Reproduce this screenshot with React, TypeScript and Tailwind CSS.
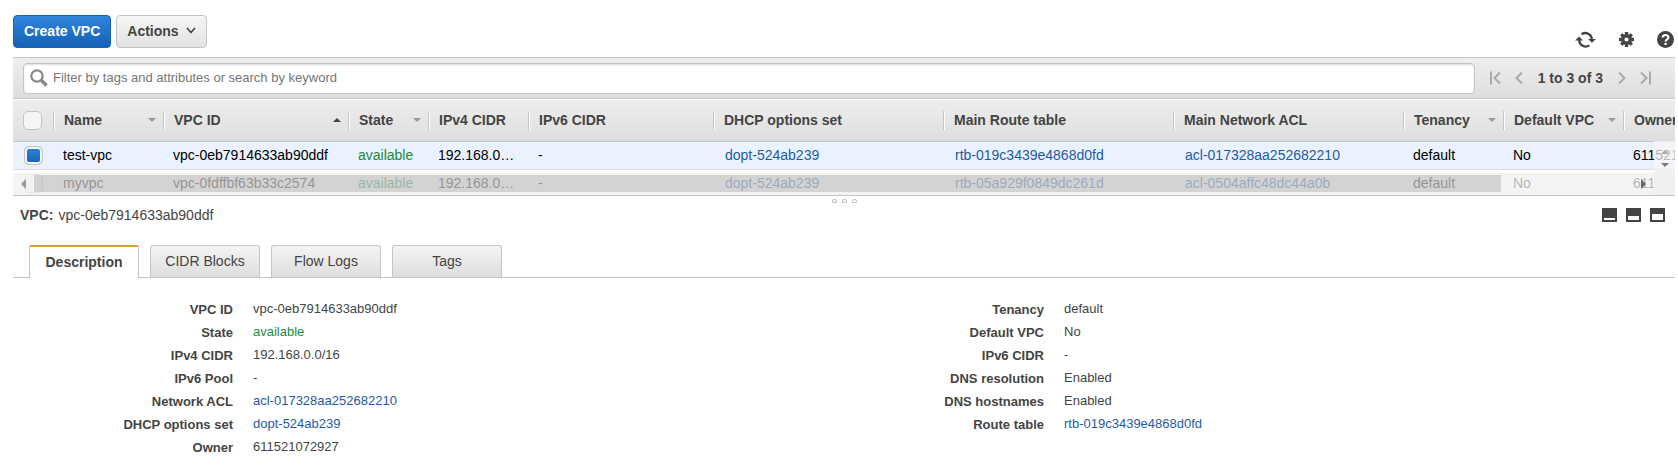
import type { ReactNode } from "react";

type Column = { label: string; width: string; sort?: "asc" | "idle" };

const columns: Column[] = [
  { label: "Name", width: "w-[110px]", sort: "idle" },
  { label: "VPC ID", width: "w-[185px]", sort: "asc" },
  { label: "State", width: "w-[80px]", sort: "idle" },
  { label: "IPv4 CIDR", width: "w-[100px]" },
  { label: "IPv6 CIDR", width: "w-[185px]" },
  { label: "DHCP options set", width: "w-[230px]" },
  { label: "Main Route table", width: "w-[230px]" },
  { label: "Main Network ACL", width: "w-[230px]" },
  { label: "Tenancy", width: "w-[100px]", sort: "idle" },
  { label: "Default VPC", width: "w-[120px]", sort: "idle" },
  { label: "Owner", width: "w-[130px]" },
];

const rows = [
  {
    selected: true,
    cells: ["test-vpc", "vpc-0eb7914633ab90ddf", "available", "192.168.0.0/16", "-", "dopt-524ab239", "rtb-019c3439e4868d0fd", "acl-017328aa252682210", "default", "No", "611521072927"],
  },
  {
    selected: false,
    cells: ["myvpc", "vpc-0fdffbf63b33c2574", "available", "192.168.0.0/16", "-", "dopt-524ab239", "rtb-05a929f0849dc261d", "acl-0504affc48dc44a0b", "default", "No", "611521072927"],
  },
];

const tabs = ["Description", "CIDR Blocks", "Flow Logs", "Tags"];

const leftDetails = [
  ["VPC ID", "vpc-0eb7914633ab90ddf"],
  ["State", "available"],
  ["IPv4 CIDR", "192.168.0.0/16"],
  ["IPv6 Pool", "-"],
  ["Network ACL", "acl-017328aa252682210"],
  ["DHCP options set", "dopt-524ab239"],
  ["Owner", "611521072927"],
];

const rightDetails = [
  ["Tenancy", "default"],
  ["Default VPC", "No"],
  ["IPv6 CIDR", "-"],
  ["DNS resolution", "Enabled"],
  ["DNS hostnames", "Enabled"],
  ["Route table", "rtb-019c3439e4868d0fd"],
];

function isLink(text: string) {
  return /^(dopt|rtb|acl)-/.test(text);
}

function Value({ text }: { text: string }) {
  if (isLink(text)) return <a href="#" className="text-[#1f5aa6]">{text}</a>;
  if (text === "available") return <span className="text-[#1d8a3c]">{text}</span>;
  return <>{text}</>;
}

function Triangle({ dir, className }: { dir: "up" | "down" | "left" | "right"; className: string }) {
  const points = { up: "0,4 4,0 8,4", down: "0,0 8,0 4,4", left: "5,0 5,10 0,5", right: "0,0 5,5 0,10" }[dir];
  const vertical = dir === "up" || dir === "down";
  return (
    <svg width={vertical ? 8 : 5} height={vertical ? 4 : 10} className={className} aria-hidden="true">
      <polygon points={points} fill="currentColor" />
    </svg>
  );
}

function IconButton({ label, children }: { label: string; children: ReactNode }) {
  return <button type="button" aria-label={label} className="block shrink-0">{children}</button>;
}

function RefreshIcon() {
  return (
    <svg width="21" height="17" viewBox="0 0 21 17" aria-hidden="true">
      <path d="M6.6 3.2A6.5 6.5 0 0 1 16.8 8.5M14.4 14.4A6.5 6.5 0 0 1 4.2 9" fill="none" stroke="#444" strokeWidth="2.3" />
      <path d="M13 8H21L17 11.8zM0 9.4h8L4 5.6z" fill="#444" />
    </svg>
  );
}

function GearIcon() {
  return (
    <svg width="15" height="17" viewBox="0 0 16 16" aria-hidden="true">
      <g fill="#444">
        {[0, 45, 90, 135].map((angle) => (
          <rect key={angle} x="6.2" y="0" width="3.6" height="16" rx="0.6" transform={`rotate(${angle} 8 8)`} />
        ))}
        <circle cx="8" cy="8" r="5.8" />
      </g>
      <circle cx="8" cy="8" r="2.2" fill="#fff" />
    </svg>
  );
}

function HelpIcon() {
  return (
    <svg width="17" height="17" viewBox="0 0 17 17" aria-hidden="true">
      <circle cx="8.5" cy="8.5" r="8.5" fill="#444" />
      <path d="M5.7 6.6C5.7 3.2 11.4 3.2 11.4 6.4 11.4 8.4 8.6 8.3 8.6 10.6" fill="none" stroke="#fff" strokeWidth="2.1" />
      <rect x="7.5" y="11.8" width="2.2" height="2.2" fill="#fff" />
    </svg>
  );
}

function PageArrow({ dir, bar }: { dir: "left" | "right"; bar?: boolean }) {
  return (
    <svg width={bar ? 11 : 8} height="14" className={dir === "right" ? "-scale-x-100" : ""} aria-hidden="true">
      {bar && <path d="M1 0.5v13" stroke="#aaa" strokeWidth="2" />}
      <path d={bar ? "M10 1.5 4.5 7 10 12.5" : "M7 1.5 1.5 7 7 12.5"} fill="none" stroke="#aaa" strokeWidth="2" />
    </svg>
  );
}

function PaneIcon({ top }: { top: number }) {
  return (
    <svg width="15" height="14" shapeRendering="crispEdges" aria-hidden="true">
      <rect width="15" height="14" fill="#444" />
      <rect x="2" y={top} width="11" height={12 - top} fill="#fff" />
    </svg>
  );
}

function CheckBox({ label, checked }: { label: string; checked?: boolean }) {
  return (
    <input
      type="checkbox"
      aria-label={label}
      defaultChecked={checked}
      className="block size-[19px] appearance-none rounded-[5px] border border-[#c4c4c4] bg-[#f5f5f5] bg-origin-border shadow-[inset_0_0_0_2px_#f5f5f5] checked:bg-linear-to-b checked:from-[#2f86dc] checked:to-[#1562b8]"
    />
  );
}

function Details({ items }: { items: string[][] }) {
  return (
    <dl className="grid grid-cols-[220px_1fr] content-start gap-x-5 text-[13px] leading-[23px]">
      {items.map(([label, value]) => (
        <div key={label} className="col-span-2 grid h-[23px] grid-cols-subgrid">
          <dt className="pt-px text-right font-bold">{label}</dt>
          <dd><Value text={value} /></dd>
        </div>
      ))}
    </dl>
  );
}

export default function App() {
  return (
    <main className="bg-white pr-[3px] pl-[13px] font-['Liberation_Sans',Arial,sans-serif] text-sm text-[#444]">
      <header className="flex items-end justify-between pt-[15px] pb-[9px]">
        <div className="flex gap-[5px]">
          <button type="button" className="h-[33px] rounded-[4px] border border-[#1a62b3] bg-linear-to-b from-[#2f86dc] to-[#1560b5] px-[10px] pb-[2px] font-bold text-white">
            Create VPC
          </button>
          <button type="button" className="flex h-[33px] items-center gap-[7px] rounded-[4px] border border-[#c4c4c4] bg-linear-to-b from-[#f6f6f6] to-[#e2e2e2] px-[10px] pb-[2px] font-bold">
            Actions
            <svg width="10" height="7" aria-hidden="true"><path d="M1 1l4 4.5L9 1" fill="none" stroke="#444" strokeWidth="1.7" /></svg>
          </button>
        </div>
        <div className="mr-px flex items-center gap-[23px]">
          <IconButton label="Refresh"><RefreshIcon /></IconButton>
          <IconButton label="Settings"><GearIcon /></IconButton>
          <IconButton label="Help"><HelpIcon /></IconButton>
        </div>
      </header>

      <div className="flex h-[42px] items-center border-y border-[#c4c4c4] bg-linear-to-b from-[#eee] to-[#dedede] pr-6 pl-[10px]">
        <label className="flex h-[31px] flex-1 items-center gap-[5px] rounded-[4px] border border-[#c4c4c4] bg-white pl-[6px] shadow-[inset_0_1px_2px_#ddd]">
          <svg width="18" height="18" aria-hidden="true">
            <circle cx="7" cy="7" r="5.7" fill="none" stroke="#888" strokeWidth="2.2" />
            <path d="M11 11l5.5 5.5" stroke="#888" strokeWidth="3.6" />
          </svg>
          <input type="text" aria-label="Filter" placeholder="Filter by tags and attributes or search by keyword" className="min-w-0 flex-1 bg-transparent text-[13px] outline-none placeholder:text-[#757575]" />
        </label>
        <nav aria-label="Pages" className="flex items-center gap-[14px] pl-[15px]">
          <IconButton label="First page"><PageArrow dir="left" bar /></IconButton>
          <IconButton label="Previous page"><PageArrow dir="left" /></IconButton>
          <span className="px-px font-bold whitespace-nowrap">1 to 3 of 3</span>
          <IconButton label="Next page"><PageArrow dir="right" /></IconButton>
          <IconButton label="Last page"><PageArrow dir="right" bar /></IconButton>
        </nav>
      </div>

      <section aria-label="VPC list" className="relative h-[97px] overflow-hidden border-b border-[#c4c4c4]">
        <table className="w-[1740px] table-fixed border-separate border-spacing-0">
          <thead>
            <tr className="h-[43px] bg-linear-to-b from-[#eee] to-[#dedede]">
              <th className="w-10 border-t border-b border-t-white border-b-[#c4c4c4] p-0 pl-[10px]"><CheckBox label="Select all" /></th>
              {columns.map((column) => (
                <th key={column.label} scope="col" className={`${column.width} border-t border-b border-t-white border-b-[#c4c4c4] p-0 text-left`}>
                  <div className="flex h-[19px] items-center justify-between border-l border-[#c4c4c4] pr-[7px] pb-[2px] pl-[10px] whitespace-nowrap shadow-[inset_1px_0_0_#fff]">
                    {column.label}
                    {column.sort === "idle" && <Triangle dir="down" className="text-[#999]" />}
                    {column.sort === "asc" && <Triangle dir="up" className="text-[#444]" />}
                  </div>
                </th>
              ))}
            </tr>
          </thead>
          <tbody>
            {rows.map((row) => (
              <tr key={row.cells[0]} className={row.selected ? "h-7 bg-[#e9f2fe]" : "h-7 bg-white"}>
                <td className="border-b border-[#ddd] p-0 pl-[11px]"><CheckBox label={`Select ${row.cells[0]}`} checked={row.selected} /></td>
                {row.cells.map((cell, index) => (
                  <td key={index} className={`truncate border-b border-[#ddd] p-0 pr-3 pb-[2px] text-black ${isLink(cell) ? "pl-3" : "pl-[10px]"}`}>
                    <Value text={cell} />
                  </td>
                ))}
              </tr>
            ))}
          </tbody>
        </table>
        <div className="absolute right-0 bottom-[26px] flex h-7 w-[21px] flex-col items-center justify-end gap-[9px] bg-[#f4f4f4]/75 pb-[2px]">
          <Triangle dir="up" className="text-[#aaa]" />
          <Triangle dir="down" className="text-[#777]" />
        </div>
        <div className="absolute right-0 bottom-0 h-[26px] w-[21px] bg-[#f0f0f0]" />
        <div className="absolute right-[21px] bottom-0 left-0 flex h-[22px] items-center pr-2 pl-2">
          <div className="absolute inset-0 flex flex-col">
            <div className="h-[2px] bg-[#f0f0f0]/80" />
            <div className="flex flex-1">
              <div className="w-[21px] bg-[#f0f0f0]/75" />
              <div className="flex-1 bg-[#c4c4c4]/75" />
              <div className="w-[153px] bg-[#f0f0f0]/75" />
            </div>
            <div className="h-[3px] bg-[#f0f0f0]/80" />
          </div>
          <Triangle dir="left" className="relative text-[#999]" />
          <Triangle dir="right" className="relative ml-auto text-[#666]" />
        </div>
      </section>

      <div className="flex justify-center gap-[5px] pt-[3px] pb-px" aria-hidden="true">
        <span className="h-1 w-[5px] rounded-t-[2px] border border-[#c4c4c4]" />
        <span className="h-1 w-[5px] rounded-t-[2px] border border-[#c4c4c4]" />
        <span className="h-1 w-[5px] rounded-t-[2px] border border-[#c4c4c4]" />
      </div>

      <section aria-label="VPC details">
        <div className="flex h-[22px] items-center justify-between pr-[10px] pl-[7px]">
          <p className="flex gap-[5px]"><strong>VPC:</strong> <span>vpc-0eb7914633ab90ddf</span></p>
          <div className="flex gap-[9px]">
            <IconButton label="Small pane"><PaneIcon top={10} /></IconButton>
            <IconButton label="Half pane"><PaneIcon top={8} /></IconButton>
            <IconButton label="Full pane"><PaneIcon top={6} /></IconButton>
          </div>
        </div>

        <div className="mt-[19px] flex h-[33px] gap-[11px] border-b border-[#c4c4c4] pl-4" role="tablist">
          {tabs.map((tab, index) => (
            <button
              key={tab}
              type="button"
              role="tab"
              aria-selected={index === 0}
              className={
                index === 0
                  ? "-mb-px w-[110px] rounded-t-[2px] border-x border-t-2 border-x-[#c4c4c4] border-t-[#dd9f33] bg-white pb-[2px] font-bold"
                  : "w-[110px] rounded-t-[3px] border border-b-0 border-[#c4c4c4] bg-linear-to-b from-[#f4f4f4] to-[#dedede] pb-[2px]"
              }
            >
              {tab}
            </button>
          ))}
        </div>

        <div className="grid grid-cols-2 pt-[19px] pr-10">
          <Details items={leftDetails} />
          <Details items={rightDetails} />
        </div>
      </section>
    </main>
  );
}
